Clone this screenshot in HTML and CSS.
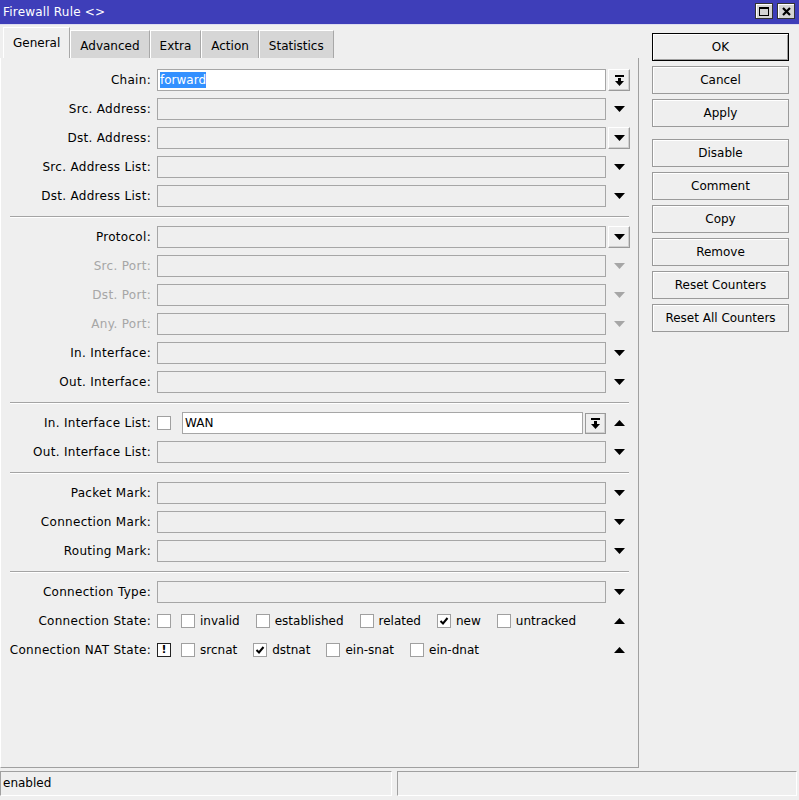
FILE: index.html
```html
<!DOCTYPE html>
<html>
<head>
<meta charset="utf-8">
<title>Firewall Rule</title>
<link rel="stylesheet" href="styles.css">
</head>
<body>
<div class="window">
  <div class="titlebar">
    <span class="title">Firewall Rule &lt;&gt;</span>
    <div class="tbtns">
      <span class="tbtn"><span class="maxsq"></span></span>
      <span class="tbtn"><svg width="9" height="9" viewBox="0 0 9 9"><path d="M1 1L8 8M8 1L1 8" stroke="#000" stroke-width="2.2"/></svg></span>
    </div>
  </div>
  <div class="main">
    <div class="leftcol">
      <div class="tabs">
        <div class="tab active">General</div>
        <div class="tab">Advanced</div>
        <div class="tab">Extra</div>
        <div class="tab">Action</div>
        <div class="tab">Statistics</div>
      </div>
      <div class="panel">
        <div class="section">
          <div class="row"><span class="lbl">Chain:</span><div class="field white"><span class="selected">forward</span></div><span class="arrow rbtn"><svg width="9" height="11" viewBox="0 0 9 11"><rect x="0" y="0" width="9" height="2"/><rect x="3" y="3" width="3" height="3"/><path d="M0 6H9L4.5 11Z"/></svg></span></div>
          <div class="row"><span class="lbl">Src. Address:</span><div class="field"></div><span class="arrow"><svg width="11" height="6" viewBox="0 0 11 6"><path d="M0 0H11L5.5 6Z"/></svg></span></div>
          <div class="row"><span class="lbl">Dst. Address:</span><div class="field"></div><span class="arrow rbtn"><svg width="11" height="6" viewBox="0 0 11 6"><path d="M0 0H11L5.5 6Z"/></svg></span></div>
          <div class="row"><span class="lbl">Src. Address List:</span><div class="field"></div><span class="arrow"><svg width="11" height="6" viewBox="0 0 11 6"><path d="M0 0H11L5.5 6Z"/></svg></span></div>
          <div class="row"><span class="lbl">Dst. Address List:</span><div class="field"></div><span class="arrow"><svg width="11" height="6" viewBox="0 0 11 6"><path d="M0 0H11L5.5 6Z"/></svg></span></div>
        </div>
        <div class="sep"></div>
        <div class="section">
          <div class="row"><span class="lbl">Protocol:</span><div class="field"></div><span class="arrow rbtn"><svg width="11" height="6" viewBox="0 0 11 6"><path d="M0 0H11L5.5 6Z"/></svg></span></div>
          <div class="row disabled"><span class="lbl">Src. Port:</span><div class="field"></div><span class="arrow"><svg width="11" height="6" viewBox="0 0 11 6"><path d="M0 0H11L5.5 6Z"/></svg></span></div>
          <div class="row disabled"><span class="lbl">Dst. Port:</span><div class="field"></div><span class="arrow"><svg width="11" height="6" viewBox="0 0 11 6"><path d="M0 0H11L5.5 6Z"/></svg></span></div>
          <div class="row disabled"><span class="lbl">Any. Port:</span><div class="field"></div><span class="arrow"><svg width="11" height="6" viewBox="0 0 11 6"><path d="M0 0H11L5.5 6Z"/></svg></span></div>
          <div class="row"><span class="lbl">In. Interface:</span><div class="field"></div><span class="arrow"><svg width="11" height="6" viewBox="0 0 11 6"><path d="M0 0H11L5.5 6Z"/></svg></span></div>
          <div class="row"><span class="lbl">Out. Interface:</span><div class="field"></div><span class="arrow"><svg width="11" height="6" viewBox="0 0 11 6"><path d="M0 0H11L5.5 6Z"/></svg></span></div>
        </div>
        <div class="sep"></div>
        <div class="section">
          <div class="row"><span class="lbl">In. Interface List:</span>
            <div class="combo">
              <span class="cb"></span>
              <div class="field white short">WAN</div>
              <span class="smallbtn rbtn"><svg width="9" height="11" viewBox="0 0 9 11"><rect x="0" y="0" width="9" height="2"/><rect x="3" y="3" width="3" height="3"/><path d="M0 6H9L4.5 11Z"/></svg></span>
            </div>
            <span class="arrow"><svg width="11" height="6" viewBox="0 0 11 6"><path d="M0 6H11L5.5 0Z"/></svg></span></div>
          <div class="row"><span class="lbl">Out. Interface List:</span><div class="field"></div><span class="arrow"><svg width="11" height="6" viewBox="0 0 11 6"><path d="M0 0H11L5.5 6Z"/></svg></span></div>
        </div>
        <div class="sep"></div>
        <div class="section">
          <div class="row"><span class="lbl">Packet Mark:</span><div class="field"></div><span class="arrow"><svg width="11" height="6" viewBox="0 0 11 6"><path d="M0 0H11L5.5 6Z"/></svg></span></div>
          <div class="row"><span class="lbl">Connection Mark:</span><div class="field"></div><span class="arrow"><svg width="11" height="6" viewBox="0 0 11 6"><path d="M0 0H11L5.5 6Z"/></svg></span></div>
          <div class="row"><span class="lbl">Routing Mark:</span><div class="field"></div><span class="arrow"><svg width="11" height="6" viewBox="0 0 11 6"><path d="M0 0H11L5.5 6Z"/></svg></span></div>
        </div>
        <div class="sep"></div>
        <div class="section">
          <div class="row"><span class="lbl">Connection Type:</span><div class="field"></div><span class="arrow"><svg width="11" height="6" viewBox="0 0 11 6"><path d="M0 0H11L5.5 6Z"/></svg></span></div>
          <div class="row"><span class="lbl">Connection State:</span>
            <div class="checks">
              <span class="cb lead"></span>
              <span class="item"><span class="cb"></span>invalid</span>
              <span class="item"><span class="cb"></span>established</span>
              <span class="item"><span class="cb"></span>related</span>
              <span class="item"><span class="cb"><svg width="12" height="12" viewBox="0 0 12 12"><path d="M2.5 6L5 8.5L9.5 3" fill="none" stroke="#000" stroke-width="2"/></svg></span>new</span>
              <span class="item"><span class="cb"></span>untracked</span>
            </div>
            <span class="arrow"><svg width="11" height="6" viewBox="0 0 11 6"><path d="M0 6H11L5.5 0Z"/></svg></span></div>
          <div class="row"><span class="lbl">Connection NAT State:</span>
            <div class="checks">
              <span class="cb lead not">!</span>
              <span class="item"><span class="cb"></span>srcnat</span>
              <span class="item"><span class="cb"><svg width="12" height="12" viewBox="0 0 12 12"><path d="M2.5 6L5 8.5L9.5 3" fill="none" stroke="#000" stroke-width="2"/></svg></span>dstnat</span>
              <span class="item"><span class="cb"></span>ein-snat</span>
              <span class="item"><span class="cb"></span>ein-dnat</span>
            </div>
            <span class="arrow"><svg width="11" height="6" viewBox="0 0 11 6"><path d="M0 6H11L5.5 0Z"/></svg></span></div>
        </div>
      </div>
    </div>
    <div class="buttons">
      <div class="btn default">OK</div>
      <div class="btn">Cancel</div>
      <div class="btn">Apply</div>
      <div class="btn gapped">Disable</div>
      <div class="btn">Comment</div>
      <div class="btn">Copy</div>
      <div class="btn">Remove</div>
      <div class="btn">Reset Counters</div>
      <div class="btn">Reset All Counters</div>
    </div>
  </div>
  <div class="statusbar">
    <div class="sb left">enabled</div>
    <div class="sb right"></div>
  </div>
</div>
</body>
</html>
```
FILE: styles.css
```css
* { box-sizing: border-box; }
html, body { margin: 0; padding: 0; }
body {
  width: 799px;
  height: 800px;
  overflow: hidden;
  background: #efefef;
  font-family: "DejaVu Sans", "Liberation Sans", sans-serif;
  font-size: 12px;
  color: #000;
}
.window { display: flex; flex-direction: column; height: 800px; }

/* title bar */
.titlebar {
  height: 25px;
  background: #3e3eb9;
  display: flex;
  align-items: center;
  justify-content: space-between;
  padding: 0 4px 0 3px;
  border-bottom: 1px solid #dcdcf0;
}
.title { color: #fff; font-size: 12px; letter-spacing: 0.2px; }
.tbtns { display: flex; gap: 4px; margin-top: -2px; }
.tbtn {
  width: 18px;
  height: 16px;
  background: #d4d4d4;
  border: 1px solid #333;
  box-shadow: inset 1px 1px #fff;
  display: flex;
  align-items: center;
  justify-content: center;
}
.maxsq { width: 10px; height: 9px; border: 1px solid #000; border-top-width: 2px; }

/* main */
.main { display: flex; height: 743px; }
.leftcol { width: 639px; display: flex; flex-direction: column; }
.tabs { height: 33px; display: flex; align-items: flex-end; padding-left: 3px; }
.tab {
  height: 28px;
  padding: 0 9px;
  background: #d6d6d6;
  border: 1px solid #a8a8a8;
  border-left-color: #fff;
  border-top-color: #fff;
  border-bottom: none;
  display: flex;
  align-items: center;
  padding-top: 2px;
}
.tab.active { height: 31px; background: #efefef; padding-top: 0; }

.panel {
  flex: 1;
  border-left: 1px solid #fff;
  border-right: 1px solid #a0a0a0;
  border-bottom: 1px solid #a0a0a0;
  padding-top: 11px;
}
.section { display: flex; flex-direction: column; gap: 7px; }
.sep {
  height: 2px;
  border-top: 1px solid #a4a4a4;
  border-bottom: 1px solid #fff;
  margin: 9px 9px 8px 9px;
}
.row { display: flex; align-items: center; height: 22px; }
.lbl { width: 150px; margin-right: 6px; text-align: right; white-space: nowrap; letter-spacing: 0.3px; }
.row.disabled .lbl { color: #a6a6a6; }
.row.disabled .arrow svg { fill: #a6a6a6; }
.field {
  width: 449px;
  height: 22px;
  border: 1px solid #a6a6a6;
  background: #efefef;
  padding-left: 2px;
  line-height: 20px;
  white-space: nowrap;
}
.field.white { background: #fff; }
.field.short { width: 401px; }
.selected {
  display: inline-block;
  background: #3390ff;
  color: #fff;
  line-height: 16px;
  height: 16px;
  vertical-align: middle;
  margin-top: -2px;
}
.arrow {
  width: 22px;
  height: 22px;
  margin-left: 2px;
  display: flex;
  align-items: center;
  justify-content: center;
}
.rbtn {
  border: 1px solid #9a9a9a;
  border-left-color: #fff;
  border-top-color: #fff;
  background: #efefef;
  box-shadow: inset -1px -1px #d0d0d0;
}
.combo { width: 449px; display: flex; align-items: center; }
.combo .cb { margin-right: 11px; }
.smallbtn {
  width: 21px;
  height: 21px;
  margin-left: 2px;
  display: flex;
  align-items: center;
  justify-content: center;
  border-color: #9a9a9a;
}

.cb {
  width: 14px;
  height: 14px;
  border: 1px solid #a0a0a0;
  background: #fff;
  flex: none;
  display: flex;
  align-items: center;
  justify-content: center;
}
.cb.not { border-color: #222; font-weight: bold; font-size: 11px; line-height: 12px; }
.checks { width: 449px; display: flex; align-items: center; white-space: nowrap; }
.checks .lead { margin-right: 10px; }
.item { display: flex; align-items: center; gap: 5px; margin-right: 16px; }

/* right buttons */
.buttons {
  margin-left: 13px;
  padding-top: 8px;
  width: 137px;
  display: flex;
  flex-direction: column;
  gap: 5px;
}
.btn {
  height: 28px;
  border: 1px solid #9a9a9a;
  background: #efefef;
  box-shadow: inset 1px 1px #fff;
  display: flex;
  align-items: center;
  justify-content: center;
  white-space: nowrap;
}
.btn.default { border-color: #000; box-shadow: inset 1px 1px #fff, inset -1px -1px #a0a0a0; }
.btn.gapped { margin-top: 7px; }

/* status bar */
.statusbar { margin-top: 3px; height: 25px; display: flex; gap: 5px; }
.sb {
  height: 25px;
  border: 1px solid #fff;
  border-top-color: #a0a0a0;
  border-left-color: #a0a0a0;
  padding-left: 2px;
  line-height: 23px;
}
.sb.left { width: 392px; }
.sb.right { width: 400px; }
```
